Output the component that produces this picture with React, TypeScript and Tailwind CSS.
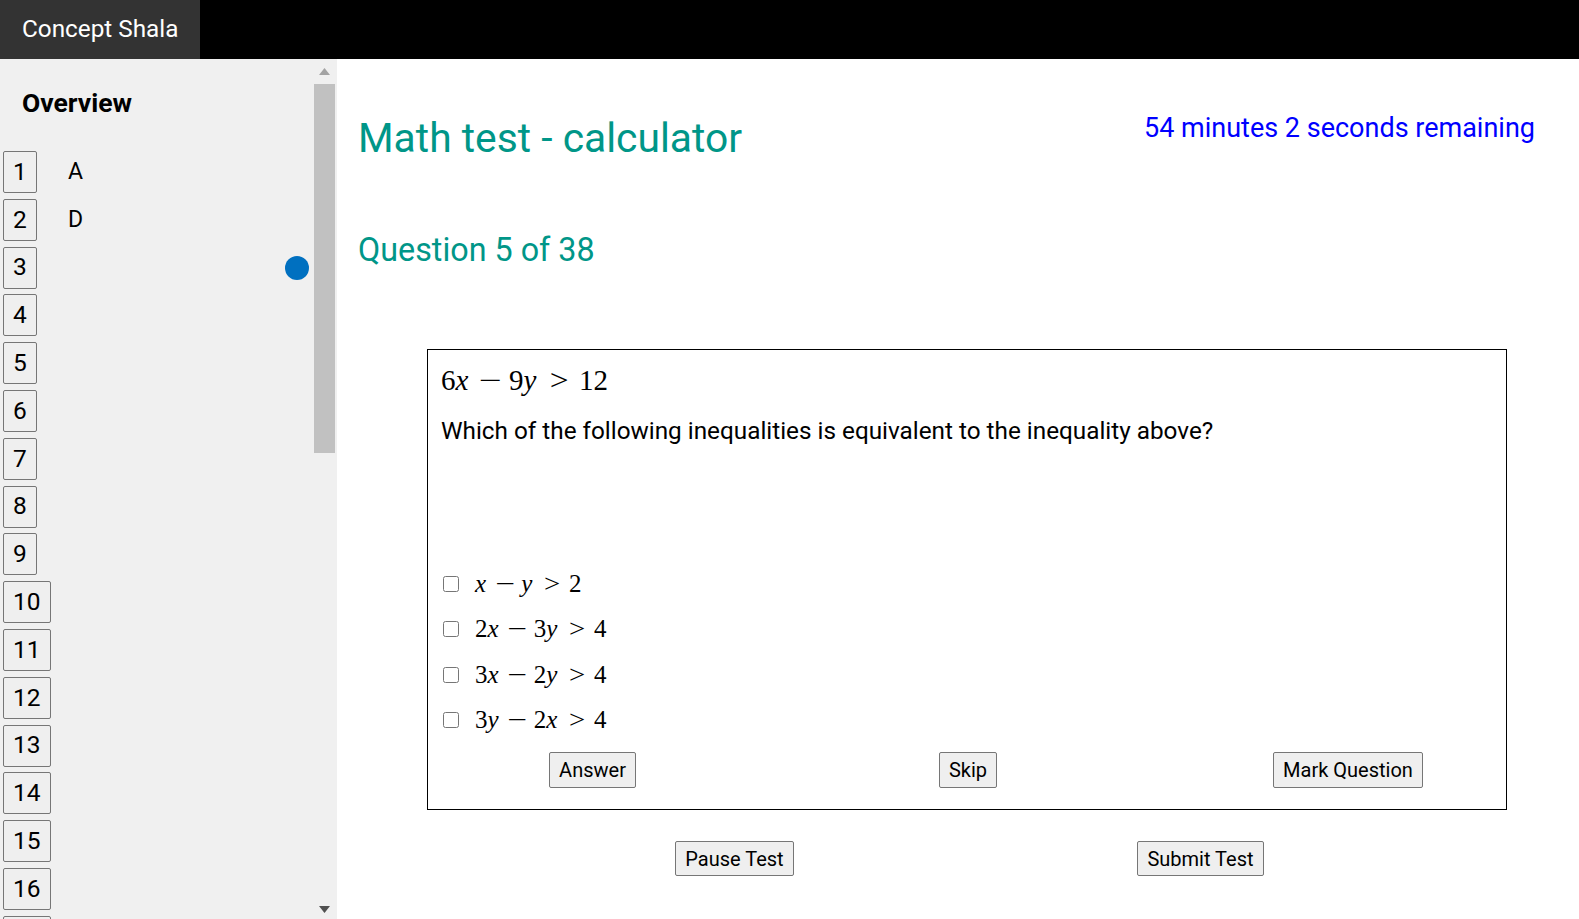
import React from "react";

const answers: Record<number, string> = { 1: "A", 2: "D" };
const marked = new Set([3]);

const btn =
  "rounded-[2px] border border-[#767676] bg-[#efefef] text-black hover:bg-[#e5e5e5]";

// renders a small inequality like "2x − 3y > 4" in a TeX-ish way
function MathLine({ expr, className }: { expr: string; className?: string }) {
  const parts = expr.split(" ");
  return (
    <span className={`font-['Liberation_Serif',serif] whitespace-nowrap ${className ?? ""}`}>
      {parts.map((p, i) => {
        if (p === "−")
          return (
            <span key={i} className="mx-[0.38em] inline-block scale-x-[1.4]">
              −
            </span>
          );
        if (p === ">")
          return (
            <span key={i} className="mx-[0.41em] inline-block scale-x-[1.15]">
              &gt;
            </span>
          );
        return (
          <span key={i}>
            {p.split("").map((c, j) =>
              /[a-z]/.test(c) ? (
                <i key={j} className="mr-[0.08em]">
                  {c}
                </i>
              ) : (
                <span key={j}>{c}</span>
              )
            )}
          </span>
        );
      })}
    </span>
  );
}

function Scrollbar() {
  return (
    <div className="flex h-full w-[23px] flex-col pr-[2px]">
      <div className="flex justify-center pt-[9px]">
        <svg width="11" height="7" viewBox="0 0 11 7">
          <polygon points="5.5,0 11,7 0,7" fill="#a3a3a3" />
        </svg>
      </div>
      <div className="mt-[9px] h-[369px] w-[21px] bg-[#c1c1c1]" />
      <div className="mb-[6px] mt-auto flex justify-center">
        <svg width="11" height="7" viewBox="0 0 11 7">
          <polygon points="0,0 11,0 5.5,7" fill="#505050" />
        </svg>
      </div>
    </div>
  );
}

function Sidebar() {
  const rows = Array.from({ length: 17 }, (_, i) => i + 1);
  return (
    <aside className="flex h-[860px] w-[337px] shrink-0 bg-[#f0f0f0]">
      <div className="flex-1 overflow-hidden">
        <h2 className="pl-[22px] pt-[28px] text-[26.5px] font-bold leading-[31px] text-black">
          Overview
        </h2>
        <ul className="mt-[33px] flex flex-col gap-[5.8px] pl-[3px]">
          {rows.map((n) => (
            <li key={n} className="flex items-center">
              <div className="w-[65px] shrink-0">
                <button className={`${btn} h-[42px] px-[9px] text-[24.5px] leading-none`}>{n}</button>
              </div>
              <span className="text-[23px] text-black">{answers[n] ?? ""}</span>
              {marked.has(n) ? (
                <span className="ml-auto mr-[5px] h-6 w-6 rounded-full bg-[#0070c0]" />
              ) : null}
            </li>
          ))}
        </ul>
      </div>
      <Scrollbar />
    </aside>
  );
}

const options = ["x − y > 2", "2x − 3y > 4", "3x − 2y > 4", "3y − 2x > 4"];

export default function App() {
  return (
    <div className="flex h-[919px] flex-col overflow-hidden bg-white font-['Roboto',sans-serif]">
      <header className="flex h-[59px] shrink-0 bg-black">
        <div className="flex w-[200px] items-center bg-[#333333] pl-[22px] text-[24.3px] text-white">
          Concept Shala
        </div>
      </header>

      <div className="flex flex-1">
        <Sidebar />

        <main className="flex-1 pl-[21px] pt-[52px]">
          <div className="flex items-start justify-between pr-[44px]">
            <h1 className="mt-[2px] text-[40.8px] leading-[50px] text-[#009688]">
              Math test - calculator
            </h1>
            <p className="text-[27px] leading-[34px] text-[#0000ff]">54 minutes 2 seconds remaining</p>
          </div>

          <h2 className="mt-[68px] text-[32.3px] leading-[38px] text-[#009688]">Question 5 of 38</h2>

          <section className="ml-[69px] mt-[80px] w-[1080px] border border-black px-[13px] pb-[21px] pt-[13px]">
            <p className="text-[29px] leading-[34px] text-black">
              <MathLine expr="6x − 9y > 12" />
            </p>
            <p className="mt-[20px] text-[24.3px] leading-[28px] text-black">
              Which of the following inequalities is equivalent to the inequality above?
            </p>

            <ul className="mt-[116px]">
              {options.map((o) => (
                <li key={o} className="flex h-[45.5px] items-center">
                  <input type="checkbox" className="m-0 ml-[2px] h-[16px] w-[16px]" />
                  <MathLine expr={o} className="ml-[16px] text-[25px] leading-[30px] text-black" />
                </li>
              ))}
            </ul>

            <div className="mt-[9px] flex">
              <button className={`${btn} ml-[108px] h-[36px] w-[87px] text-[20px]`}>Answer</button>
              <button className={`${btn} ml-[303px] h-[36px] w-[58px] text-[20px]`}>Skip</button>
              <button className={`${btn} ml-[276px] h-[36px] w-[150px] text-[20px]`}>Mark Question</button>
            </div>
          </section>

          <div className="mt-[31px] flex">
            <button className={`${btn} ml-[317px] h-[35px] w-[119px] text-[20px]`}>Pause Test</button>
            <button className={`${btn} ml-[343px] h-[35px] w-[127px] text-[20px]`}>Submit Test</button>
          </div>
        </main>
      </div>
    </div>
  );
}
